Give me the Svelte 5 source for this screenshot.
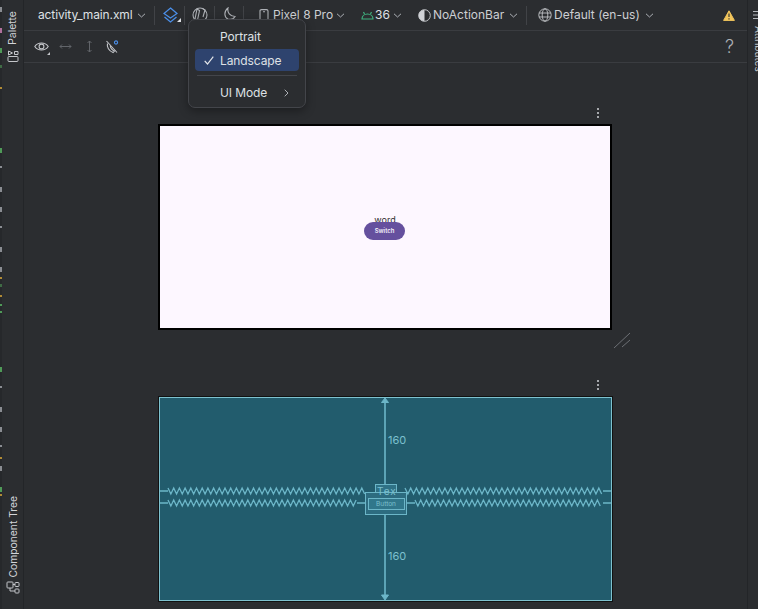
<script>
  const rawMarks = [
    { top: 7, h: 5, color: '#8a8d92' },
    { top: 28, h: 5, color: '#b0709c' },
    { top: 48, h: 5, color: '#4f9a58' },
    { top: 65, h: 3, color: '#3f6b45' },
    { top: 87, h: 2, color: '#b08a35' },
    { top: 148, h: 5, color: '#4f9a58' },
    { top: 166, h: 2, color: '#8a8d92' },
    { top: 187, h: 5, color: '#8a8d92' },
    { top: 207, h: 5, color: '#8a8d92' },
    { top: 226, h: 2, color: '#8a8d92' },
    { top: 247, h: 5, color: '#8a8d92' },
    { top: 267, h: 5, color: '#8a8d92' },
    { top: 277, h: 2, color: '#b08a35' },
    { top: 284, h: 3, color: '#3f6b45' },
    { top: 295, h: 2, color: '#b08a35' },
    { top: 304, h: 2, color: '#4f9a58' },
    { top: 311, h: 2, color: '#4f9a58' },
    { top: 367, h: 5, color: '#4f9a58' },
    { top: 386, h: 2, color: '#8a8d92' },
    { top: 407, h: 5, color: '#8a8d92' },
    { top: 427, h: 5, color: '#8a8d92' },
    { top: 445, h: 2, color: '#8a8d92' },
    { top: 457, h: 2, color: '#b08a35' },
    { top: 466, h: 5, color: '#8a8d92' },
    { top: 487, h: 5, color: '#4f9a58' },
    { top: 494, h: 2, color: '#b08a35' }
  ];

  // gap above each mark, so they sit in normal flow
  const marks = rawMarks.map((m, i) => ({
    ...m,
    gap: i === 0 ? m.top : m.top - rawMarks[i - 1].top - rawMarks[i - 1].h
  }));

  function zigzag(x1, x2, y) {
    let pts = [];
    let up = true;
    for (let x = x1; x <= x2; x += 2.85) {
      pts.push(`${x},${y + (up ? -3 : 3)}`);
      up = !up;
    }
    return pts.join(' ');
  }
</script>

<div class="ide">
  <div class="gutter">
    {#each marks as m}
      <i style="margin-top: {m.gap}px; height: {m.h}px; background: {m.color}"></i>
    {/each}
  </div>

  <aside class="side left">
    <div class="vtab palette">
      <span>Palette</span>
      <svg width="12" height="12" viewBox="0 0 12 12" fill="none" stroke="#c4c6ca" stroke-width="1"><rect x="1" y="6.500" width="10" height="5" rx="1"/><path d="M1.500 1 5.500 3 1.500 5Z"/><path d="M7.500 1.500H11V4.500H7.500Z"/></svg>
    </div>
    <div class="vtab tree">
      <span>Component Tree</span>
      <svg width="14" height="13" viewBox="0 0 14 13" fill="none" stroke="#c4c6ca" stroke-width="1"><rect x="1" y="1" width="6" height="6" rx=".8"/><rect x="9" y="1.500" width="4" height="4" rx=".8"/><rect x="9" y="8" width="4" height="4" rx=".8"/><path d="M4 7V10H9M7 3.500H9"/></svg>
    </div>
  </aside>

  <main class="main">
    <div class="toolbar top">
      <span class="item file">activity_main.xml</span>
      <svg class="chev" viewBox="0 0 9 5"><path d="M1 .8 4.500 4 8 .8"/></svg>
      <b class="sep s1"></b>
      <span class="corner-wrap layers">
        <svg width="15" height="16" viewBox="0 0 15 16" fill="none" stroke="#4b8fe8" stroke-width="1.300"><path d="M7.500 1 14 6.500 7.500 11 1 6.500Z"/><path d="M1.500 10 7.500 15 13.500 10"/></svg>
        <b class="corner"></b>
      </span>
      <b class="sep s2"></b>
      <svg class="rotate" width="16" height="16" viewBox="0 0 16 16" fill="none" stroke="#aeb1b6" stroke-width="1.100"><circle cx="8" cy="8" r="7"/><path d="M5 2 7.500 3.500 5.500 13 3 12ZM10.500 1.500 13 3 11 10"/></svg>
      <b class="sep s3"></b>
      <svg class="moon" width="13" height="13" viewBox="0 0 13 13" fill="none" stroke="#aeb1b6" stroke-width="1.100"><path d="M5 1C4 5.500 7 9.500 12 9.500 10.500 12 7.500 12.800 5 12 1.200 10.500 .5 4.500 5 1Z"/></svg>
      <b class="sep s4"></b>
      <svg class="phone" width="10" height="12" viewBox="0 0 10 12" fill="none" stroke="#aeb1b6" stroke-width="1.100"><path d="M1 12V2C1 1 1.500 .6 2.500 .6H7.500C8.500 .6 9 1 9 2V12"/><path d="M4 2.800H6"/></svg>
      <span class="item device">Pixel 8 Pro</span>
      <svg class="chev c2" viewBox="0 0 9 5"><path d="M1 .8 4.500 4 8 .8"/></svg>
      <svg class="droid" width="13" height="9" viewBox="0 0 13 9" fill="none" stroke="#3fb27f" stroke-width="1.200"><path d="M1 8C1 5 3.500 3 6.500 3S12 5 12 8ZM3.500 3 2.500 1M9.500 3 10.500 1"/></svg>
      <span class="item api">36</span>
      <svg class="chev c3" viewBox="0 0 9 5"><path d="M1 .8 4.500 4 8 .8"/></svg>
      <svg class="theme" width="13" height="13" viewBox="0 0 13 13"><circle cx="6.500" cy="6.500" r="5.800" fill="none" stroke="#c4c6ca"/><path d="M6.500.7a5.800 5.800 0 0 0 0 11.600Z" fill="#d0d2d6"/></svg>
      <span class="item themename">NoActionBar</span>
      <svg class="chev c4" viewBox="0 0 9 5"><path d="M1 .8 4.500 4 8 .8"/></svg>
      <b class="sep s5"></b>
      <svg class="globe" width="14" height="14" viewBox="0 0 14 14" fill="none" stroke="#c4c6ca" stroke-width=".9"><circle cx="7" cy="7" r="6.200"/><ellipse cx="7" cy="7" rx="2.800" ry="6.200"/><path d="M1 5H13M1 9H13"/></svg>
      <span class="item locale">Default (en-us)</span>
      <svg class="chev c5" viewBox="0 0 9 5"><path d="M1 .8 4.500 4 8 .8"/></svg>
      <svg class="warn" width="12" height="11" viewBox="0 0 12 11"><path d="M6 .8 11.400 10.400H.6Z" fill="#f2c55c" stroke="#f2c55c" stroke-linejoin="round"/><path d="M6 3.500V7M6 8.200V9.400" stroke="#2b2d30" stroke-width="1.100"/></svg>
    </div>

    <div class="toolbar second">
      <span class="corner-wrap eye">
        <svg width="15" height="11" viewBox="0 0 15 11" fill="none" stroke="#c4c6ca" stroke-width="1.100"><path d="M.8 5.500C4 .8 11 .8 14.200 5.500 11 10.200 4 10.200 .8 5.500Z"/><circle cx="7.500" cy="5.500" r="2.400"/></svg>
        <b class="corner small"></b>
      </span>
      <svg class="horiz" width="13" height="7" viewBox="0 0 13 7" fill="none" stroke="#62656a"><path d="M1 3.500H12M3 1.500 1 3.500 3 5.500M10 1.500 12 3.500 10 5.500"/></svg>
      <svg class="vert" width="7" height="13" viewBox="0 0 7 13" fill="none" stroke="#62656a"><path d="M3.500 1V12M1.500 3 3.500 1 5.500 3M1.500 10 3.500 12 5.500 10"/></svg>
      <svg class="magnet" width="14" height="14" viewBox="0 0 14 14" fill="none" stroke="#c4c6ca" stroke-width="1.100"><path d="M2.500 3.500C1.500 7 4 11 8 12.500L9.500 11C7 10 5.500 8 5.200 5.500"/><path d="M1.500 1 12 12.500"/><circle cx="11" cy="2.500" r="1.600" stroke="#4b8fe8"/></svg>
      <span class="help">?</span>
    </div>

    <div class="surface">
      <div class="dots d1"><i></i><i></i><i></i></div>
      <div class="device-frame">
        <div class="word">word</div>
        <div class="switch">Switch</div>
      </div>
      <svg class="resize" width="18" height="18" viewBox="0 0 18 18" fill="none" stroke="#6d7075"><path d="M1 17 17 2M9 16 17 9"/></svg>
      <div class="dots d2"><i></i><i></i><i></i></div>
      <div class="blueprint">
        <svg width="451" height="202" viewBox="0 0 451 202" fill="none" stroke="#6cb6c8">
          <!-- vertical constraints -->
          <path d="M225 2V86M225 116V198" stroke-width="1.600"/>
          <path d="M221.500 4.500 225 0 228.500 4.500Z" fill="#6cb6c8"/>
          <path d="M221.500 197 225 202 228.500 197Z" fill="#6cb6c8"/>
          <!-- horizontal springs -->
          <g stroke-width="1.300">
            <path d="M0 93H8M0 105H8M443 93H451M443 105H451"/>
            <polyline points={zigzag(8, 205, 93)} />
            <polyline points={zigzag(8, 197, 105)} />
            <polyline points={zigzag(245, 443, 93)} />
            <polyline points={zigzag(255, 443, 105)} />
            <path d="M197 105H205M246 105H255"/>
          </g>
          <!-- widgets -->
          <rect x="215.500" y="86.500" width="21" height="13" fill="#2f7286"/>
          <rect x="205.500" y="94.500" width="41" height="22" fill="#2d6c80"/>
          <rect x="208.500" y="100.500" width="36" height="11" fill="#31778b"/>
        </svg>
        <span class="dim dim-top">160</span>
        <span class="dim dim-bottom">160</span>
        <span class="tv-label">Tex</span>
        <span class="btn-label">Button</span>
      </div>
    </div>

    <div class="menu">
      <div class="row">Portrait</div>
      <div class="row selected">
        <svg class="check" width="10" height="9" viewBox="0 0 10 9" fill="none" stroke="#e4e6ea" stroke-width="1.200"><path d="M.7 4.800 3.500 8 9.300 .7"/></svg>
        Landscape
      </div>
      <div class="menu-sep"></div>
      <div class="row last">UI Mode
        <svg class="arrow" width="5" height="8" viewBox="0 0 5 8" fill="none" stroke="#aeb1b6"><path d="M.7 .7 4 4 .7 7.300"/></svg>
      </div>
    </div>
  </main>

  <aside class="side right">
    <svg class="attr-icon" width="6" height="10" viewBox="0 0 6 10" fill="none" stroke="#b5b8bd"><path d="M0 1.500H6M0 5H6M0 8.500H6"/></svg>
    <span class="attr">Attributes</span>
  </aside>
</div>

<style>
  :global(body) {
    margin: 0;
    background: #2b2d30;
    overflow: hidden;
  }

  .ide {
    display: flex;
    width: 758px;
    height: 609px;
    overflow: hidden;
    background: #2b2d30;
    color: #dfe1e5;
    font-family: Inter, "Noto Sans", sans-serif;
    font-size: 12px;
  }

  .gutter {
    width: 2px;
    flex: none;
    display: flex;
    flex-direction: column;
    background: #26282b;
  }

  .gutter i {
    display: block;
    flex: none;
    width: 2px;
  }

  .side {
    flex: none;
    display: flex;
    flex-direction: column;
    background: #2b2d30;
  }

  .side.left {
    width: 21px;
    justify-content: space-between;
    align-items: center;
    border-right: 1px solid #232528;
  }

  .vtab {
    display: flex;
    flex-direction: column;
    align-items: center;
    font-size: 10.5px;
    color: #d2d4d8;
  }

  .vtab span {
    writing-mode: vertical-rl;
    transform: rotate(180deg);
    line-height: 12px;
  }

  .vtab.palette { margin-top: 11px; gap: 5px; }
  .vtab.tree { margin-bottom: 15px; gap: 4px; }
  .vtab.tree span { font-size: 10.3px; }

  .side.right {
    width: 10px;
    border-left: 1px solid #232528;
    overflow: hidden;
    align-items: flex-start;
  }

  .attr-icon {
    margin: 10px 0 0 5px;
    flex: none;
  }

  .attr {
    flex: none;
    width: 12px;
    writing-mode: vertical-rl;
    font-size: 10px;
    color: #bfc1c5;
    margin: 6px 0 0 5px;
    line-height: 12px;
    white-space: nowrap;
  }

  .main {
    flex: 1;
    position: relative;
    display: flex;
    flex-direction: column;
    min-width: 0;
  }

  .toolbar {
    flex: none;
    display: flex;
    align-items: center;
    border-bottom: 1px solid #3a3c40;
    box-sizing: border-box;
  }

  .toolbar svg { flex: none; display: block; }

  .toolbar.top { height: 31px; padding-left: 14px; }
  .toolbar.second { height: 32px; padding-left: 10px; }

  .item {
    flex: none;
    white-space: nowrap;
    line-height: 16px;
    color: #cdcfd3;
  }

  .file { width: 95px; color: #dfe1e5; letter-spacing: -0.12px; }
  .device { width: 59px; margin-left: 4px; }
  .api { width: 15px; margin-left: 1px; color: #dfe1e5; }
  .themename { width: 70px; margin-left: 2px; }
  .locale { width: 83px; margin-left: 2px; }

  .chev {
    width: 9px;
    height: 5px;
    margin-left: 4px;
    fill: none;
    stroke: #aeb1b6;
    stroke-width: 1;
  }

  .c2 { margin-left: 4px; }
  .c3 { margin-left: 3px; }
  .c4 { margin-left: 6px; }
  .c5 { margin-left: 8px; }

  .sep {
    flex: none;
    width: 1px;
    height: 19px;
    background: #414347;
  }

  .s1 { margin-left: 8px; }
  .s2 { margin-left: 6px; }
  .s3 { margin-left: 6px; }
  .s4 { margin-left: 7px; }
  .s5 { margin-left: 8px; }

  .corner-wrap {
    position: relative;
    flex: none;
    display: block;
  }

  .layers { margin-left: 8px; }
  .rotate { margin-left: 7px; }
  .moon { margin-left: 8px; margin-top: -3px; }
  .phone { margin-left: 15px; }
  .droid { margin-left: 16px; }
  .theme { margin-left: 16px; }
  .globe { margin-left: 11px; }
  .warn { margin-left: 69px; }

  .corner {
    position: absolute;
    right: -3px;
    bottom: 1px;
    width: 0;
    height: 0;
    border-left: 4px solid transparent;
    border-bottom: 4px solid #dfe1e5;
  }

  .corner.small {
    right: -1px;
    bottom: -3px;
    border-left-width: 3px;
    border-bottom-width: 3px;
    border-bottom-color: #c4c6ca;
  }

  .horiz { margin-left: 10px; }
  .vert { margin-left: 14px; }
  .magnet { margin-left: 12px; }

  .help {
    margin-left: auto;
    margin-right: 13px;
    font-size: 18px;
    font-weight: 300;
    line-height: 18px;
    color: #aeb1b6;
  }

  .surface {
    flex: 1;
    display: flex;
    flex-direction: column;
    align-items: flex-start;
    padding-left: 134px;
    min-height: 0;
  }

  .dots {
    flex: none;
    display: flex;
    flex-direction: column;
    gap: 2px;
  }

  .dots i {
    width: 2px;
    height: 2px;
    border-radius: 50%;
    background: #d0d2d6;
  }

  .d1 { margin: 45px 0 6px 439px; }
  .d2 { margin: 31px 0 7px 439px; }

  .device-frame {
    flex: none;
    width: 450px;
    height: 202px;
    background: #fdf7ff;
    border: 2px solid #000;
    display: flex;
    flex-direction: column;
    align-items: center;
    justify-content: center;
  }

  .word {
    height: 7px;
    font-size: 9px;
    line-height: 10px;
    color: #333;
  }

  .switch {
    width: 41px;
    height: 18px;
    margin-right: 1px;
    border-radius: 9px;
    background: #65509e;
    color: #f4effa;
    font-size: 6px;
    font-weight: 600;
    display: flex;
    align-items: center;
    justify-content: center;
  }

  .resize {
    flex: none;
    display: block;
    margin: 1px 0 0 455px;
  }

  .blueprint {
    flex: none;
    position: relative;
    width: 451px;
    height: 202px;
    margin-left: 1px;
    background: #225c6d;
    border: 1px solid #7ec2cf;
    box-shadow: 0 0 0 1px #111;
  }

  .blueprint svg {
    display: block;
  }

  .dim {
    position: absolute;
    left: 228px;
    font-size: 11px;
    line-height: 14px;
    color: #7cc0cf;
  }

  .dim-top { top: 35px; }
  .dim-bottom { top: 151px; }

  .tv-label {
    position: absolute;
    left: 217px;
    top: 87px;
    white-space: nowrap;
    font-size: 10px;
    line-height: 12px;
    letter-spacing: 1px;
    color: #7cc0cf;
  }

  .btn-label {
    position: absolute;
    left: 208px;
    top: 100px;
    width: 36px;
    text-align: center;
    font-size: 6.5px;
    line-height: 12px;
    color: #7cc0cf;
  }

  .menu {
    position: absolute;
    left: 164px;
    top: 19px;
    width: 118px;
    height: 89px;
    box-sizing: border-box;
    background: #2b2d30;
    border: 1px solid #43454a;
    border-radius: 7px;
    box-shadow: 0 3px 10px rgba(0, 0, 0, 0.35);
    padding: 5px 6px 0;
  }

  .row {
    position: relative;
    height: 22px;
    margin-bottom: 2px;
    line-height: 23px;
    padding-left: 25px;
    color: #dfe1e5;
    letter-spacing: -0.1px;
    border-radius: 4px;
  }

  .row.selected {
    margin-bottom: 0;
    background: #2e436e;
  }

  .check {
    position: absolute;
    left: 9px;
    top: 7px;
  }

  .menu-sep {
    height: 1px;
    background: #43454a;
    margin: 4px 2px 5px;
  }

  .arrow {
    position: absolute;
    left: 89px;
    top: 8px;
  }
</style>
